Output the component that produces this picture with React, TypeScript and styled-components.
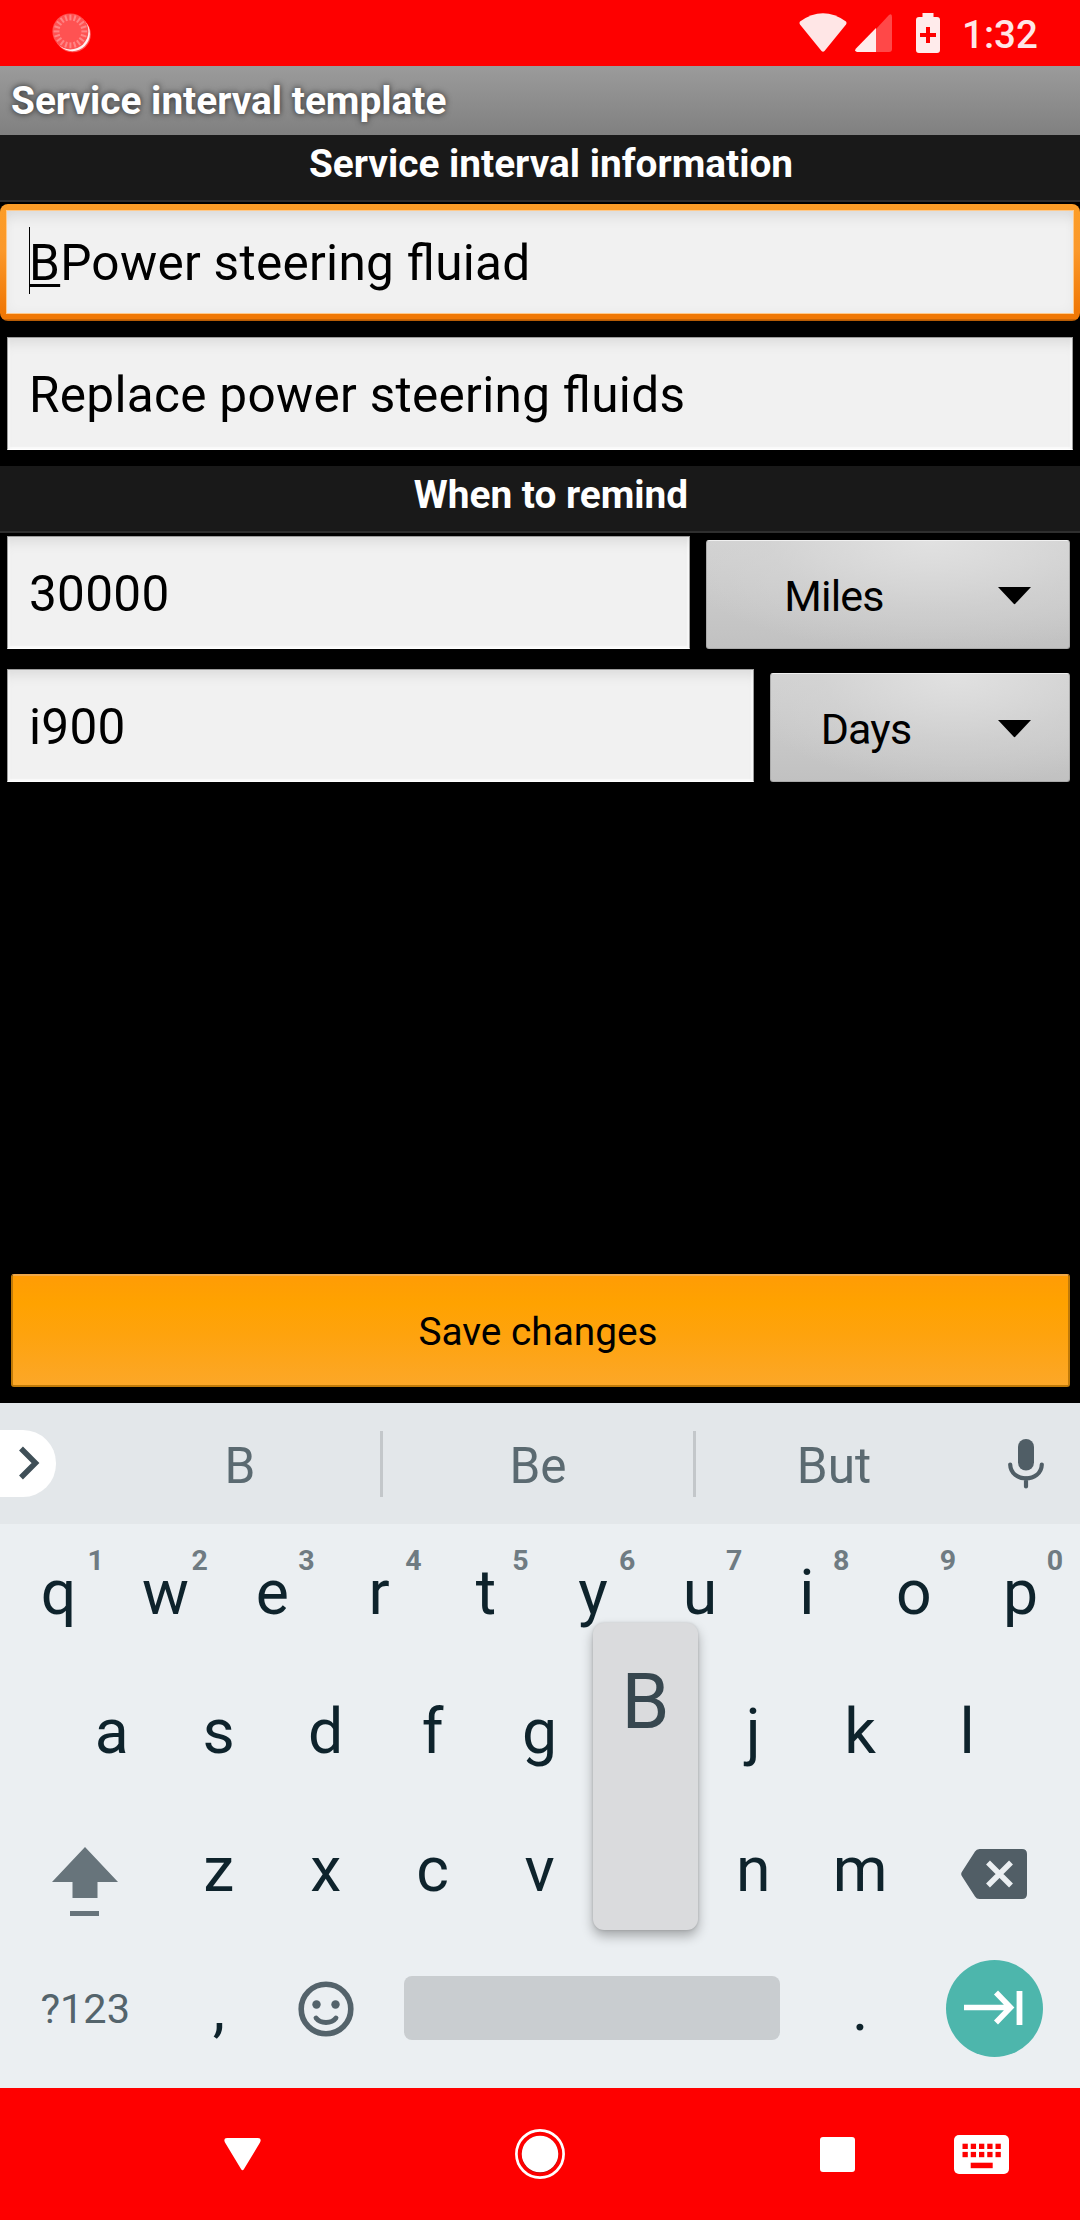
import React from "react";
import styled, { createGlobalStyle, css } from "styled-components";

const GlobalStyle = createGlobalStyle`
  *, *::before, *::after { box-sizing: border-box; }
  body { margin: 0; background: #000; }
`;

const Screen = styled.main`
  width: 1080px;
  height: 2220px;
  display: flex;
  flex-direction: column;
  background: #000;
  font-family: Roboto, "Noto Sans", sans-serif;
  overflow: hidden;
`;

const StatusBar = styled.header`
  height: 66px;
  flex: none;
  display: flex;
  align-items: center;
  padding: 0 44px 0 52px;
  background: #fe0000;
  color: #ffe6e6;
`;

const Spacer = styled.div`
  flex: 1;
`;

const WifiSlot = styled.span`
  display: flex;
  margin-right: 8px;
`;

const SignalSlot = styled.span`
  display: flex;
  margin-right: 24px;
`;

const Clock = styled.span`
  width: 74px;
  margin-left: 22px;
  padding-top: 3px;
  font-size: 38.5px;
  font-weight: 500;
  line-height: 64px;
  white-space: nowrap;
`;

const TitleBar = styled.h1`
  height: 69px;
  flex: none;
  margin: 0;
  padding-left: 11px;
  background: linear-gradient(#9b9b9b, #808080);
  color: #fff;
  font-size: 38.8px;
  font-weight: 700;
  line-height: 69px;
  text-shadow: 0 0 6px rgba(0, 0, 0, 0.75);
`;

const SectionHeader = styled.h2`
  height: 67px;
  flex: none;
  margin: 0;
  padding-left: 22px;
  border-bottom: 2px solid #2e2e2e;
  background: #191919;
  color: #fff;
  font-size: 38.8px;
  font-weight: 700;
  line-height: 58px;
  text-align: center;
`;

const Form = styled.form`
  height: 1268px;
  flex: none;
  display: flex;
  flex-direction: column;
`;

const fieldText = css`
  color: #000;
  font-size: 49.5px;
  font-feature-settings: "liga" 1;
  letter-spacing: 0.3px;
  white-space: nowrap;
`;

const Field = styled.div`
  height: 113px;
  flex: 1;
  padding: 2px 21px 0;
  border: 1px solid #9c9c9c;
  border-bottom-color: #fff;
  background: #f1f1f1;
  box-shadow: inset 0 12px 14px -8px rgba(0, 0, 0, 0.1), inset 2px 0 1px #fafafa,
    inset -2px 0 1px #fafafa, inset 0 -2px 1px #fafafa;
  line-height: 111px;
  ${fieldText}
`;

const FocusRing = styled.div`
  height: 117px;
  flex: none;
  margin-top: 2px;
  padding: 7px 7px 8px;
  border-radius: 8px;
  background: linear-gradient(#fc9d27 0%, #fb982a 40%, #f07805 90%, #f07805 98%, #b85c05 99%);
`;

const FocusedField = styled.div`
  height: 102px;
  display: flex;
  align-items: center;
  padding-left: 22px;
  background: #f1f1f1;
  box-shadow: inset 0 14px 14px -8px rgba(0, 0, 0, 0.08), inset 0 0 12px rgba(0, 0, 0, 0.04),
    0 0 0 1px #ffc98a;
  ${fieldText}
`;

const Caret = styled.i`
  width: 1px;
  height: 67px;
  margin: -3px -1px 0 0;
  background: #000;
`;

const Composing = styled.span`
  text-decoration: underline;
  text-decoration-thickness: 2.5px;
  text-underline-offset: 3.5px;
  text-decoration-skip-ink: none;
`;

const FieldText = styled.span`
  padding-top: 2px;
`;

const FieldRow = styled.div<{ $top: number; $bottom?: number }>`
  flex: none;
  display: flex;
  align-items: flex-end;
  padding: ${(p) => p.$top}px 7px ${(p) => p.$bottom ?? 0}px;
`;

const Spinner = styled.div<{ $width: number }>`
  width: ${(p) => p.$width}px;
  height: 109px;
  flex: none;
  display: flex;
  align-items: center;
  margin: 0 3px 0 16px;
  padding: 2px 38px 0 0;
  border: 1px solid #aaa;
  border-top-color: #f0f0f0;
  border-radius: 3px;
  background: radial-gradient(ellipse 75% 105% at 62% 0%, #e1e1e1 0%, rgba(212, 212, 212, 0.6) 60%, transparent 100%),
    linear-gradient(#d2d2d2, #c1c1c1);
  color: #000;
  font-size: 43px;
  letter-spacing: -0.8px;
`;

const SpinnerLabel = styled.span`
  flex: 1;
  padding-right: 37px;
  text-align: center;
`;

const SaveButton = styled.button`
  height: 113px;
  flex: none;
  margin: auto 10px 16px 11px;
  padding: 2px 5px 0 0;
  border: 2px solid #c07a08;
  border-top-color: #f0a848;
  border-radius: 3px;
  background: linear-gradient(#ff9c05 0%, #ffa200 25%, #fea30e 55%, #fca728 100%);
  color: #000;
  font: 400 38.8px Roboto, sans-serif;
`;

const Suggestions = styled.div`
  height: 121px;
  flex: none;
  display: flex;
  align-items: center;
  background: #e3e7ea;
`;

const ExpandChip = styled.button`
  width: 56px;
  height: 67px;
  margin: 0 44px 0 0;
  padding: 0 0 1px 17px;
  display: flex;
  align-items: center;
  border: 0;
  border-radius: 0 33px 33px 0;
  background: #fff;
`;

const Suggestion = styled.span<{ $width: number; $divided?: boolean }>`
  width: ${(p) => p.$width}px;
  height: 66px;
  flex: none;
  border-right: ${(p) => (p.$divided ? "3px solid #c3c7ca" : "0")};
  color: #5b6a71;
  font-size: 49.5px;
  line-height: 71px;
  text-align: center;
`;

const MicSlot = styled.span`
  width: 108px;
  display: flex;
  justify-content: center;
`;

const Keyboard = styled.section`
  height: 564px;
  flex: none;
  position: relative;
  padding: 0 6px 0 5px;
  background: #ebeff2;
`;

const KeyRow = styled.div<{ $indent?: boolean }>`
  height: 138.6px;
  display: flex;
  padding: 0 ${(p) => (p.$indent ? 53.4 : 0)}px;
`;

const Key = styled.div<{ $span?: number; $drop?: number }>`
  flex: ${(p) => p.$span ?? 1} 1 0;
  min-width: 0;
  position: relative;
  display: flex;
  align-items: center;
  justify-content: center;
  padding-top: ${(p) => p.$drop ?? 0}px;
  color: #0e232c;
  font-size: 62.5px;
  line-height: 138px;
`;

const Hint = styled.sup<{ $right: number }>`
  position: absolute;
  top: 20px;
  right: ${(p) => p.$right}px;
  color: #6f7b82;
  font-size: 28.5px;
  font-weight: 700;
  line-height: 34px;
`;

const SymbolLabel = styled.span`
  color: #54646c;
  font-size: 41.5px;
`;

const SpaceBar = styled.div`
  width: 376px;
  height: 64px;
  margin: -2px 0 0 -1px;
  border-radius: 8px;
  background: #c9cdd0;
`;

const EnterButton = styled.div`
  width: 97px;
  height: 97px;
  margin: -2px 0 0 1px;
  display: flex;
  align-items: center;
  justify-content: center;
  border-radius: 50%;
  background: #4db6ac;
`;

const KeyPreview = styled.div`
  position: absolute;
  left: 593px;
  top: 99px;
  width: 105px;
  height: 307px;
  padding-top: 34px;
  border-radius: 11px;
  background: #dadbdd;
  box-shadow: 0 6px 12px rgba(0, 0, 0, 0.3), 0 0 3px rgba(0, 0, 0, 0.15);
  color: #37474f;
  font-size: 77px;
  line-height: 90px;
  text-align: center;
`;

const NavBar = styled.nav`
  height: 132px;
  flex: none;
  display: flex;
  align-items: center;
  padding: 0 71px 0 224px;
  background: #fe0000;
`;

const NavItem = styled.span<{ $gap: number }>`
  display: flex;
  margin-left: ${(p) => p.$gap}px;
`;

const ticks = Array.from({ length: 20 }, (_, i) => i * 18);

const SyncIcon = () => (
  <svg width="40" height="42" viewBox="0 0 40 42">
    <circle cx="20.8" cy="22.3" r="18" fill="#fff" opacity="0.35" />
    <circle cx="20.3" cy="21.6" r="17.6" fill="#fff0f0" />
    <circle cx="18.4" cy="19.4" r="18" fill="#ff5252" />
    <g stroke="#ff8585" strokeWidth="2">
      {ticks.map((a) => (
        <line key={a} x1="18.4" y1="2.6" x2="18.4" y2="8.4" transform={`rotate(${a} 18.4 19.4)`} />
      ))}
    </g>
  </svg>
);

const WifiIcon = () => (
  <svg width="48" height="40" viewBox="0 0 48 40">
    <path d="M1 8.5Q24-8 47 8.5Q48 10 47 11.5L25.5 38Q24 39.6 22.5 38L1 11.5Q0 10 1 8.5Z" fill="#ffe6e6" />
  </svg>
);

const SignalIcon = () => (
  <svg width="37" height="38" viewBox="0 0 37 38">
    <path d="M21 15L34 1Q37-1 37 3V35Q37 38 34 38H21Z" fill="#ff4848" />
    <path d="M21 14V38H2Q-1 37 1 34.500Z" fill="#ffebeb" />
  </svg>
);

const BatteryIcon = () => (
  <svg width="24" height="40" viewBox="0 0 24 40">
    <path d="M6.500 0H17.500V4H21Q24 4 24 7V37Q24 40 21 40H3Q0 40 0 37V7Q0 4 3 4H6.500Z" fill="#ffebeb" />
    <path d="M10 14H14V20H20V24H14V30H10V24H4V20H10Z" fill="#fe0000" />
  </svg>
);

const DropArrow = () => (
  <svg width="33" height="18" viewBox="0 0 33 18">
    <path d="M0 0H33L17.500 16.500Q16.500 18 15.500 16.500Z" fill="#000" />
  </svg>
);

const ChevronIcon = () => (
  <svg width="24" height="34" viewBox="0 0 24 34">
    <path d="M4 2.500L18.500 17L4 31.500" fill="none" stroke="#3f4f57" strokeWidth="5.500" />
  </svg>
);

const MicIcon = () => (
  <svg width="36" height="50" viewBox="0 0 36 50">
    <rect x="10" y="0" width="16" height="31.500" rx="8" fill="#505e66" />
    <path d="M2.200 25.500C2.700 44 33.300 44 33.800 25.500M18 39V47.500" fill="none" stroke="#505e66" strokeWidth="4.200" strokeLinecap="round" />
  </svg>
);

const ShiftIcon = () => (
  <svg width="66" height="69" viewBox="0 0 66 69">
    <path d="M33 0L66 35H45.500V51H20.500V35H0ZM18 64H47V69H18Z" fill="#67747b" />
  </svg>
);

const DeleteIcon = () => (
  <svg width="66" height="50" viewBox="0 0 66 50">
    <path d="M18.500 0H61Q66 0 66 5V45Q66 50 61 50H18.500Q15.500 50 14 47.500L.800 27Q-.400 25 .800 23L14 2.500Q15.500 0 18.500 0Z" fill="#515e66" />
    <path d="M27 13.500L50 36.500M50 13.500L27 36.500" stroke="#ebeff2" strokeWidth="5.500" />
  </svg>
);

const SmileyIcon = () => (
  <svg width="56" height="56" viewBox="0 0 56 56">
    <g fill="none" stroke="#54636b" strokeWidth="5.600">
      <circle cx="28" cy="28" r="24.800" />
      <path d="M18 37C22.500 43 33.500 43 38 37" strokeLinecap="round" strokeWidth="4.800" />
    </g>
    <circle cx="18.500" cy="23.500" r="4.200" fill="#54636b" />
    <circle cx="37.500" cy="23.500" r="4.200" fill="#54636b" />
  </svg>
);

const NextIcon = () => (
  <svg width="60" height="36" viewBox="0 0 60 36">
    <path d="M0 17.500H46M32 2.500L46.500 17.500L32 32.500" fill="none" stroke="#fff" strokeWidth="5.600" />
    <path d="M55.500 1V35" stroke="#fff" strokeWidth="5.800" />
  </svg>
);

const BackIcon = () => (
  <svg width="37" height="33" viewBox="0 0 37 33">
    <path d="M3 0H34Q38 0 36 4.500L20 31Q18.500 33.500 17 31L1 4.500Q-1 0 3 0Z" fill="#fff" />
  </svg>
);

const HomeIcon = () => (
  <svg width="50" height="50" viewBox="0 0 50 50">
    <circle cx="25" cy="25" r="23.600" fill="none" stroke="#fff" strokeWidth="2.700" />
    <circle cx="25" cy="25.600" r="18.400" fill="#a80000" />
    <circle cx="25" cy="25" r="18.300" fill="#fff" />
  </svg>
);

const RecentsIcon = () => (
  <svg width="35" height="35" viewBox="0 0 35 35">
    <rect width="35" height="35" rx="3" fill="#fff" />
  </svg>
);

const keyColumns = [8.5, 16.75, 25, 33.25, 41.5];

const KeyboardIcon = () => (
  <svg width="55" height="39" viewBox="0 0 55 39">
    <rect width="55" height="39" rx="5" fill="#fff" />
    <g fill="#fe0000">
      {[8.7, 16.9].map((y) =>
        keyColumns.map((x) => <rect key={`${x}-${y}`} x={x} y={y} width="5.3" height="5.3" />)
      )}
      <rect x="16.700" y="27.700" width="22" height="5.500" />
    </g>
  </svg>
);

const letterKeys = (letters: string) =>
  letters.split("").map((letter) => <Key key={letter}>{letter}</Key>);

export default function App() {
  return (
    <>
      <GlobalStyle />
      <Screen>
        <StatusBar>
          <SyncIcon />
          <Spacer />
          <WifiSlot><WifiIcon /></WifiSlot>
          <SignalSlot><SignalIcon /></SignalSlot>
          <BatteryIcon />
          <Clock>1:32</Clock>
        </StatusBar>
        <TitleBar>Service interval template</TitleBar>
        <Form>
          <SectionHeader>Service interval information</SectionHeader>
          <FocusRing>
            <FocusedField>
              <Caret />
              <FieldText><Composing>B</Composing>Power steering fluiad</FieldText>
            </FocusedField>
          </FocusRing>
          <FieldRow $top={16} $bottom={16}>
            <Field>Replace power steering fluids</Field>
          </FieldRow>
          <SectionHeader>When to remind</SectionHeader>
          <FieldRow $top={3}>
            <Field>30000</Field>
            <Spinner $width={364}>
              <SpinnerLabel>Miles</SpinnerLabel>
              <DropArrow />
            </Spinner>
          </FieldRow>
          <FieldRow $top={20}>
            <Field>i900</Field>
            <Spinner $width={300}>
              <SpinnerLabel>Days</SpinnerLabel>
              <DropArrow />
            </Spinner>
          </FieldRow>
          <SaveButton type="button">Save changes</SaveButton>
        </Form>
        <Suggestions>
          <ExpandChip type="button" aria-label="Expand"><ChevronIcon /></ExpandChip>
          <Suggestion $width={283} $divided>B</Suggestion>
          <Suggestion $width={313} $divided>Be</Suggestion>
          <Suggestion $width={276}>But</Suggestion>
          <MicSlot><MicIcon /></MicSlot>
        </Suggestions>
        <Keyboard>
          <KeyRow>
            {"qwertyuiop".split("").map((letter, i) => (
              <Key key={letter}>
                {letter}
                <Hint $right={i === 0 ? 8 : 11}>{(i + 1) % 10}</Hint>
              </Key>
            ))}
          </KeyRow>
          <KeyRow $indent>
            {letterKeys("asdfg")}
            <Key />
            {letterKeys("jkl")}
          </KeyRow>
          <KeyRow>
            <Key $span={1.5} $drop={23}><ShiftIcon /></Key>
            {letterKeys("zxcv")}
            <Key />
            {letterKeys("nm")}
            <Key $span={1.5} $drop={7}><DeleteIcon /></Key>
          </KeyRow>
          <KeyRow>
            <Key $span={1.5}><SymbolLabel>?123</SymbolLabel></Key>
            <Key>,</Key>
            <Key><SmileyIcon /></Key>
            <Key $span={4}><SpaceBar /></Key>
            <Key>.</Key>
            <Key $span={1.5}><EnterButton><NextIcon /></EnterButton></Key>
          </KeyRow>
          <KeyPreview>B</KeyPreview>
        </Keyboard>
        <NavBar>
          <NavItem $gap={0}><BackIcon /></NavItem>
          <NavItem $gap={254}><HomeIcon /></NavItem>
          <NavItem $gap={255}><RecentsIcon /></NavItem>
          <Spacer />
          <KeyboardIcon />
        </NavBar>
      </Screen>
    </>
  );
}
